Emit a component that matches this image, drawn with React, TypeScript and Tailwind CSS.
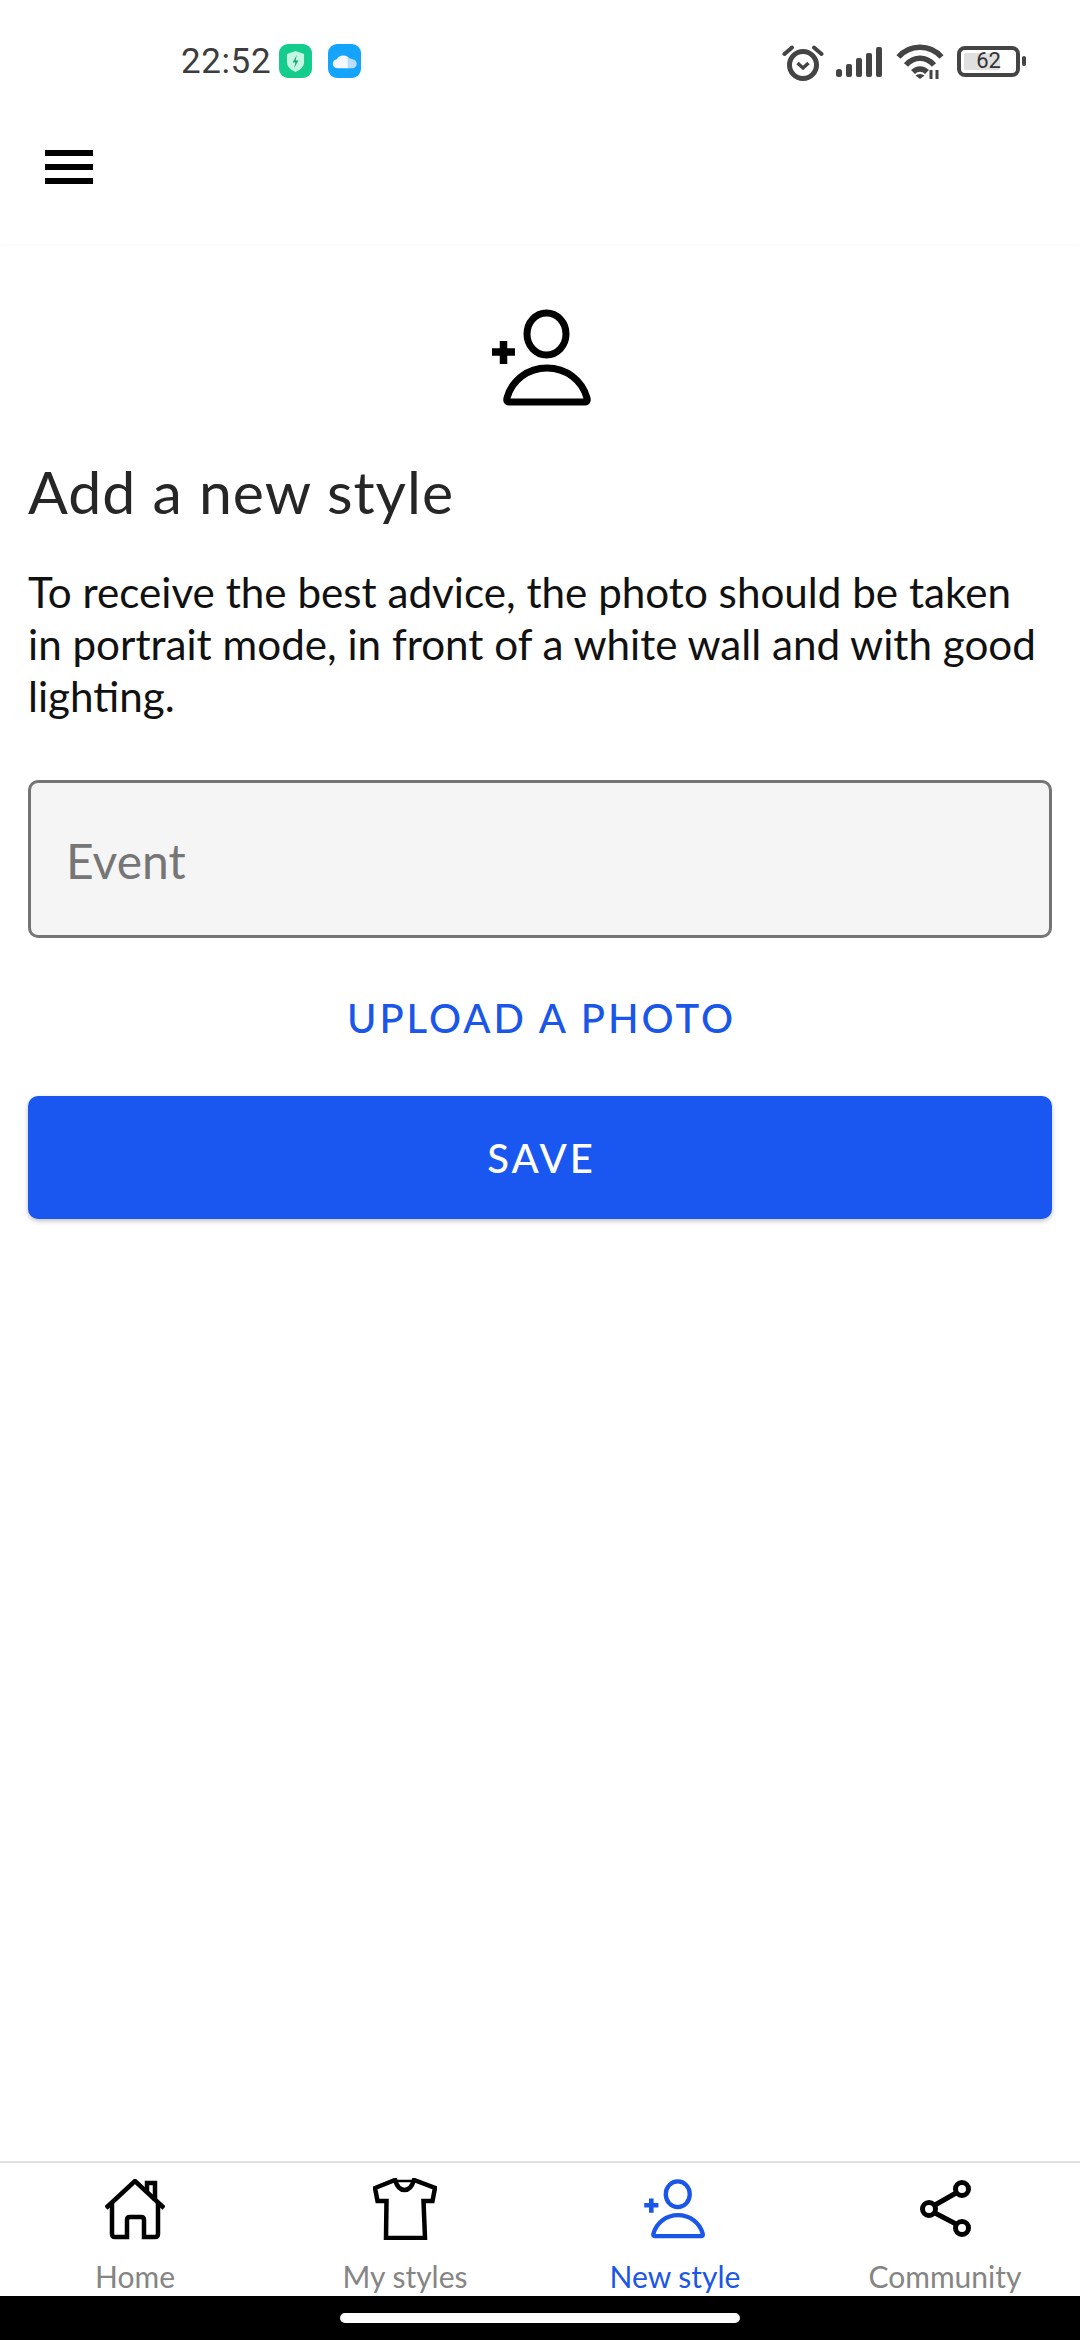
function PersonAdd({ className }: { className: string }) {
  return (
    <svg viewBox="0 0 104 100" fill="none" stroke="currentColor" strokeWidth="7" className={className}>
      <path d="M2 44 H25 M13.5 33 V56" strokeWidth="7.5" />
      <ellipse cx="56.5" cy="26" rx="19.5" ry="21" />
      <path d="M19 94 H95 Q98 94 97 90 C92 72 76 60 57 60 C38 60 22 72 17 90 Q16 94 19 94 Z" strokeLinejoin="round" />
    </svg>
  )
}

function HomeIcon() {
  return (
    <svg viewBox="0 0 60 61" fill="none" stroke="black" strokeWidth="4.5" className="w-[60px] h-[61px]">
      <path d="M1 29 L30 2 L59 29" />
      <path d="M42 14 V4 H50 V22" />
      <path d="M7 24 V55 Q7 58 10 58 H22 V41 Q22 38 25 38 H36 Q39 38 39 41 V58 H50 Q53 58 53 55 V24" />
    </svg>
  )
}

function ShirtIcon() {
  return (
    <svg viewBox="0 0 64 62" fill="none" stroke="black" strokeWidth="4.5" className="w-[64px] h-[62px]">
      <path d="M22 2 L2 10 L4.5 23 H13.5 L13 60 H52 L50.5 23 H59.5 L62 10 L41 2 Q38 12 31.5 12 Q25 12 22 2 Z" />
      <path d="M22 3 H41" strokeWidth="2.5" />
    </svg>
  )
}

function ShareIcon() {
  return (
    <svg viewBox="0 0 54 60" fill="none" stroke="black" strokeWidth="5" className="w-[54px] h-[60px]">
      <circle cx="44" cy="10" r="6.5" />
      <circle cx="11" cy="30" r="6.5" />
      <circle cx="44" cy="49" r="6.5" />
      <path d="M17 26 L38 14 M17 34 L38 45" />
    </svg>
  )
}

function StatusIcons() {
  return (
    <div className="flex items-center text-[#444444]">
      {/* alarm */}
      <svg viewBox="0 0 42 38" fill="none" stroke="currentColor" strokeWidth="5" className="w-[42px] h-[38px] mt-[2px]">
        <circle cx="21" cy="22" r="13.5" />
        <path d="M15.5 20 L21 25 L26.5 20" strokeWidth="3.5" />
        <path d="M2.5 11 L10 4.5 M39.5 11 L32 4.5" strokeLinecap="round" strokeWidth="4" />
      </svg>
      {/* signal */}
      <svg viewBox="0 0 47 32" fill="currentColor" className="w-[47px] h-[32px] ml-[12px] mt-[2px]">
        <rect x="0" y="23" width="6" height="8" rx="2.5" />
        <rect x="10" y="18" width="6" height="13" rx="2" />
        <rect x="20" y="12" width="6" height="19" rx="2" />
        <rect x="30" y="7" width="6" height="24" rx="2" />
        <rect x="40" y="1" width="6" height="30" rx="2" />
      </svg>
      {/* wifi */}
      <svg viewBox="0 0 48 36" fill="none" stroke="currentColor" strokeWidth="5.5" className="w-[48px] h-[36px] ml-[13px]">
        <path d="M2.5 14 C14 1 34 1 45.5 14" />
        <path d="M10 22 C18 13 30 13 38 22" />
        <path d="M17 29 C21 25 27 25 31 29" />
        <path d="M24 36 L19.5 32.5 Q24 29.5 28.5 32.5 Z" fill="currentColor" stroke="none" />
        <path d="M35 36 V27 M41 36 V27" strokeWidth="3" />
      </svg>
      {/* battery */}
      <div className="flex items-center ml-[13px]">
        <div className="relative w-[63px] h-[31px] border-[4px] border-[#444444] rounded-[8px] flex items-center justify-center">
          <div className="absolute left-[3px] top-[3px] bottom-[3px] w-[36px] bg-[#e0e0e0] rounded-[2px]" />
          <span className="relative text-[22px] leading-none text-[#333333] font-['Roboto',sans-serif]">62</span>
        </div>
        <div className="w-[4px] h-[10px] ml-[2px] bg-[#444444] rounded-[2px]" />
      </div>
    </div>
  )
}

function StatusBar() {
  return (
    <div className="h-[78px] pt-[44px] pl-[181px] pr-[54px] flex items-center justify-between">
      <div className="flex items-center">
        <span className="text-[35px] leading-none tracking-[0.6px] text-[#3d3d3d] font-['Roboto',sans-serif]">22:52</span>
        <div className="w-[33px] h-[34px] ml-[8px] rounded-[9px] bg-[#14cc8b] flex items-center justify-center">
          <svg viewBox="0 0 20 24" className="w-[19px] h-[23px]">
            <path d="M10 1 L19 4 V13 Q19 19 10 23 Q1 19 1 13 V4 Z" fill="#c4f8e4" />
            <path d="M11.5 5 L7 13 H10 L8.5 19 L13 11 H10 Z" fill="#13a874" />
          </svg>
        </div>
        <div className="w-[33px] h-[34px] ml-[16px] rounded-[9px] bg-[#14a4fb] flex items-center justify-center">
          <svg viewBox="0 0 28 20" className="w-[26px] h-[18px]">
            <path d="M6 18 A5 5 0 0 1 5 8 A8 7 0 0 1 18 6 L18 18 Z" fill="#f4f9ff" />
            <path d="M17 7 A6 6 0 0 1 22 8 A5 5 0 0 1 22 18 H17 Z" fill="#bcdcfb" />
          </svg>
        </div>
      </div>
      <StatusIcons />
    </div>
  )
}

const tabs = [
  { label: "Home", icon: <HomeIcon /> },
  { label: "My styles", icon: <ShirtIcon /> },
  { label: "New style", icon: <PersonAdd className="w-[64px] h-[62px] text-[#1a56e8]" />, active: true },
  { label: "Community", icon: <ShareIcon /> },
]

export default function App() {
  return (
    <div className="w-[1080px] h-[2340px] bg-white flex flex-col font-['Lato',sans-serif]">
      <div className="h-[244px] shadow-[0_2px_4px_rgba(0,0,0,0.015)]">
        <StatusBar />
        {/* Menu button */}
        <div className="pl-[45px] pt-[72px] flex flex-col gap-[8px]">
          <div className="w-[48px] h-[6px] bg-black" />
          <div className="w-[48px] h-[6px] bg-black" />
          <div className="w-[48px] h-[6px] bg-black" />
        </div>
      </div>

      <main className="flex-1 px-[28px]">
        <div className="flex justify-center pt-[64px] pl-[4px]">
          <PersonAdd className="w-[104px] h-[100px] text-black" />
        </div>
        <h1 className="mt-[48px] text-[59px] leading-[72px] tracking-[1px] font-normal text-[#262626]">Add a new style</h1>
        <p className="mt-[38px] text-[42.2px] leading-[52px] text-[#111111]">
          To receive the best advice, the photo should be taken<br />
          in portrait mode, in front of a white wall and with good<br />
          lighting.
        </p>
        <div className="mt-[58px] h-[158px] border-[3px] border-[#757575] rounded-[10px] bg-[#f5f5f5] flex items-center pl-[35px] pt-[3px]">
          <span className="text-[48px] text-[#767676]">Event</span>
        </div>
        <div className="mt-[52px] h-[56px] flex items-center justify-center pl-[3px] text-[40px] font-medium tracking-[3px] text-[#1a56e8]">
          UPLOAD A PHOTO
        </div>
        <button className="mt-[50px] w-full h-[123px] pl-[3px] rounded-[10px] bg-[#1957f0] text-white text-[40px] font-medium tracking-[3px] shadow-[0_2px_5px_rgba(0,0,0,0.25)]">
          SAVE
        </button>
      </main>

      {/* Tab bar */}
      <nav className="h-[135px] border-t-[2px] border-[#e0e0e0] grid grid-cols-4">
        {tabs.map((tab) => (
          <div key={tab.label} className="flex flex-col items-center pt-[15px]">
            <div className="h-[62px] flex items-center">{tab.icon}</div>
            <span className={`mt-[18px] text-[30px] leading-[36px] whitespace-nowrap ${tab.active ? "text-[#1a56e8]" : "text-[#858585]"}`}>
              {tab.label}
            </span>
          </div>
        ))}
      </nav>
      <div className="h-[44px] bg-black flex items-center justify-center">
        <div className="w-[400px] h-[10px] bg-white rounded-full" />
      </div>
    </div>
  )
}
